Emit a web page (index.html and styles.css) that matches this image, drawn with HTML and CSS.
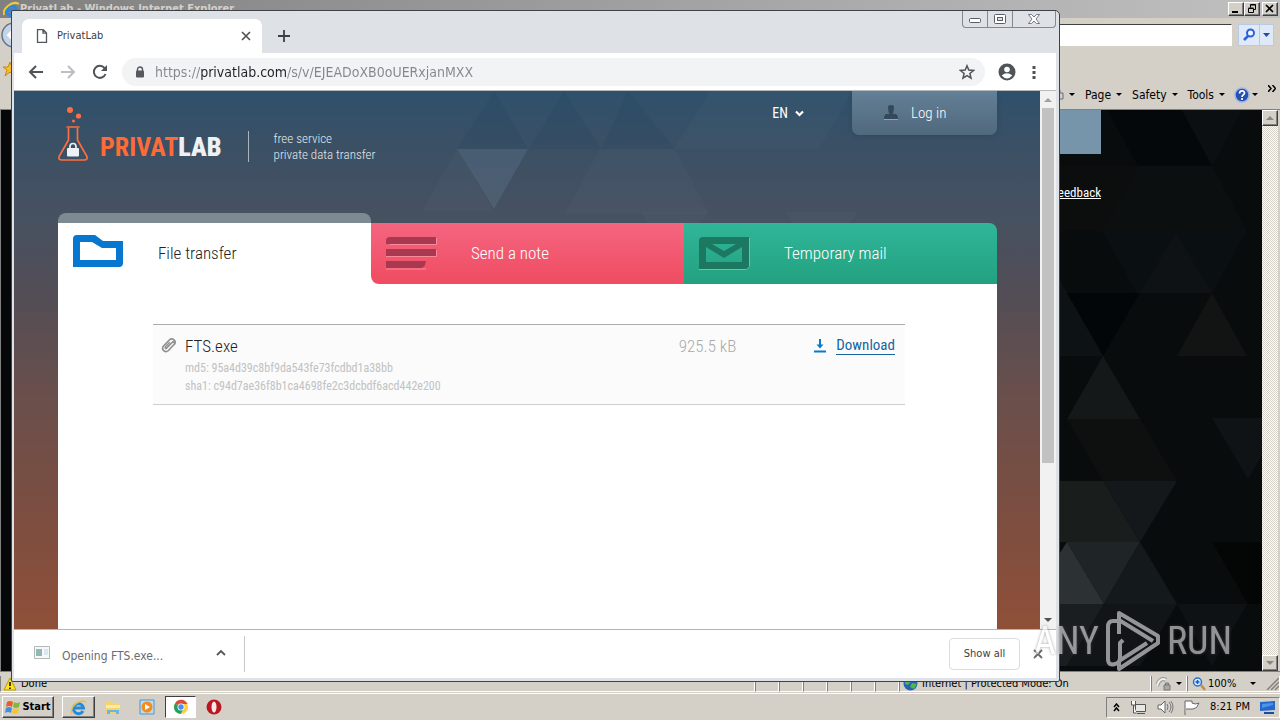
FILE: index.html
```html
<!DOCTYPE html>
<html lang="en">
<head>
<meta charset="utf-8">
<title>PrivatLab</title>
<link rel="stylesheet" href="styles.css">
</head>
<body>
<section class="ie" aria-label="Internet Explorer">
  <header class="ie-title">
    <svg class="ie-logo" width="17" height="17" viewBox="0 0 17 17"><path d="M13 12A5 5 0 1 1 13.500 9H5" fill="none" stroke="#2d86df" stroke-width="3"/><path d="M1 14C-1 8 9-1 16 3" fill="none" stroke="#f3c934" stroke-width="2"/></svg>
    <span class="ie-name">PrivatLab - Windows Internet Explorer</span>
    <div class="ie-controls">
      <button class="bevel" aria-label="Minimize"><svg width="14" height="12" viewBox="0 0 14 12"><path d="M3 9h6" stroke="#000" stroke-width="2"/></svg></button>
      <button class="bevel" aria-label="Restore"><svg width="14" height="12" viewBox="0 0 14 12"><path d="M5.500 4.500v-3h5v5h-2M5.500 2h5M3.500 5.500h5v4h-5zM3.500 5h5" fill="none" stroke="#000"/></svg></button>
      <button class="bevel ie-close" aria-label="Close"><svg width="14" height="12" viewBox="0 0 14 12"><path d="M3 2l7 7M10 2L3 9" stroke="#000" stroke-width="1.700"/></svg></button>
    </div>
  </header>
  <div class="ie-address">
    <svg class="ie-back" width="28" height="28" viewBox="0 0 28 28"><circle cx="14" cy="14" r="12" fill="#c4d3e6" stroke="#65758c" stroke-width="1.5"/><path d="M18 14H8m4-4l-4 4 4 4" fill="none" stroke="#fff" stroke-width="2"/></svg>
    <input class="ie-input" aria-label="Search">
    <div class="ie-search">
      <button aria-label="Search"><svg width="16" height="16" viewBox="0 0 16 16"><circle cx="9.500" cy="6" r="3.500" fill="#eef5ff" stroke="#2c62d8" stroke-width="2"/><path d="M7 9l-4 4" stroke="#2c62d8" stroke-width="2.500"/></svg></button>
      <button class="narrow" aria-label="Search options"><svg width="7" height="4" viewBox="0 0 7 4"><path d="M0 0h7L3.500 4z" fill="#1d4fa5"/></svg></button>
    </div>
  </div>
  <div class="ie-commands">
    <svg class="ie-star" width="14" height="14" viewBox="0 0 14 14"><path d="M7 0l2 5h5l-4 3 2 6-5-4-5 4 2-6-4-3h5z" fill="#f5bf2c" stroke="#c68a16"/></svg>
    <button aria-label="Print"><svg width="16" height="12" viewBox="0 0 16 12"><path d="M2 4h13v6H2z" fill="#c9ccd0" stroke="#6a6f76"/><path d="M5 1h7v3M6 8h6" fill="none" stroke="#6a6f76"/></svg><i class="caret"></i></button>
    <button>Page<i class="caret"></i></button>
    <button>Safety<i class="caret"></i></button>
    <button>Tools<i class="caret"></i></button>
    <button class="help" aria-label="Help"><svg width="16" height="16" viewBox="0 0 16 16"><circle cx="8" cy="8" r="7" fill="#2450b4" stroke="#9db4de" stroke-width="1.500"/><path d="M5.500 6.500C5.500 3 10.500 3 10.500 6c0 2-2.500 1.800-2.500 4M8 11v2" fill="none" stroke="#fff" stroke-width="1.700"/></svg><i class="caret"></i></button>
    <button class="more" aria-label="More commands"><svg width="8" height="7" viewBox="0 0 8 7"><path d="M0 0l3 3.500L0 7M4.500 0l3 3.500-3 3.500" fill="none" stroke="#000" stroke-width="1.500"/></svg></button>
  </div>
  <div class="ie-body">
    <div class="ie-page">
      <svg class="ie-pattern" width="202" height="561" viewBox="1060 109 202 561">
        <rect x="1060" y="109" width="202" height="561" fill="#090c0d"/>
        <path d="M1107 109h75l30 56h-74z" fill="#04080b"/><path d="M1060 165h78l-36 65h-42z" fill="#0b0e0d"/>
        <path d="M1182 109h60l-30 56z" fill="#0b0f11"/><path d="M1138 165l-36 65h145l-35-65z" fill="#0c0f10"/>
        <path d="M1102 230h145l-35 62h-75z" fill="#0a0f11"/><path d="M1176 232l36 60h-72z" fill="#0e1214"/>
        <path d="M1067 292h73l-37 63z" fill="#030608"/><path d="M1060 280l43 75h-43z" fill="#0d1214"/>
        <path d="M1212 292l35 63h-70z" fill="#121413"/><path d="M1103 355l37 63h-73z" fill="#151819"/>
        <path d="M1212 417h50v37l-14 24z" fill="#0f1316"/><path d="M1067 418h73l37 62h-74z" fill="#0d100f"/>
        <path d="M1060 480h43l37 61h-80z" fill="#191d1c"/><path d="M1103 480h74l-37 61z" fill="#14181a"/>
        <path d="M1067 541l37 62h-44v-51z" fill="#2c3133"/><path d="M1067 541h73l-36 62z" fill="#1f2426"/>
        <path d="M1140 541l37 62h-73z" fill="#14191b"/><path d="M1060 603h44l-37 62h-7z" fill="#1a1e20"/>
        <path d="M1104 603h73l-37 62h-73z" fill="#111517"/><path d="M1212 541h50v62h-14z" fill="#040505"/>
        <path d="M1177 603h70l-35 62z" fill="#0e1214"/>
      </svg>
      <div class="ie-loginbox"></div>
      <a class="feedback" href="#">Feedback</a>
    </div>
    <div class="ie-scroll">
      <button class="bevel" aria-label="Scroll up"><svg width="8" height="4" viewBox="0 0 8 4"><path d="M4 0l4 4H0z" fill="#8a8781"/></svg></button>
      <button class="bevel" aria-label="Scroll down"><svg width="8" height="4" viewBox="0 0 8 4"><path d="M4 4l4-4H0z" fill="#8a8781"/></svg></button>
    </div>
  </div>
  <footer class="ie-status">
    <div class="cell done"><svg width="14" height="14" viewBox="0 0 14 14"><path d="M7 1l6 12H1z" fill="#ffe51f" stroke="#b79b00"/><path d="M7 5v4M7 10.500v1.500" stroke="#000" stroke-width="1.500"/></svg>Done</div>
    <div class="cell tiny"></div><div class="cell tiny"></div><div class="cell tiny"></div><div class="cell tiny"></div><div class="cell tiny"></div><div class="cell tiny"></div>
    <div class="cell zone"><svg width="15" height="15" viewBox="0 0 15 15"><circle cx="7.500" cy="7.500" r="7" fill="#2764b5"/><path d="M2 4l5-3 2 3-4 5-3-1zM9 7l5 1-3 5-4-2z" fill="#4fb848"/></svg>Internet | Protected Mode: On</div>
    <div class="cell lockcell"><svg width="16" height="14" viewBox="0 0 16 14"><path d="M1 9c2-7 6-8 9-6" fill="none" stroke="#999" stroke-width="4"/><path d="M1 9c2-7 6-8 9-6" fill="none" stroke="#eee" stroke-width="2"/><path d="M8 8h6v5H8zM9.500 8V6h3v2" fill="#aaa" stroke="#777"/></svg><i class="caret"></i></div>
    <div class="cell zoom"><svg width="14" height="14" viewBox="0 0 14 14"><circle cx="5.500" cy="5" r="4" fill="#d9ebff" stroke="#2b6dd0" stroke-width="1.500"/><path d="M3.500 5h4M5.500 3v4" stroke="#1857bb" stroke-width="1.500"/><path d="M9 8l4 5" stroke="#c58b4e" stroke-width="2.500"/></svg>100%<i class="caret"></i><svg class="grip" width="13" height="13" viewBox="0 0 13 13"><path d="M1 13L13 1M5 13l8-8M9 13l4-4" stroke="#85817a" stroke-width="1.500"/></svg></div>
  </footer>
</section>

<footer class="taskbar">
  <button class="bevel start"><svg width="16" height="15" viewBox="0 0 16 15"><path d="M2 2q3-2 6 0L7 7Q4 5 1 7z" fill="#ea5b2a"/><path d="M9 2q3 2 6 0l-1 5q-3 2-6 0z" fill="#7fba3c"/><path d="M1 8q3-2 6 0l-1 5q-3-2-6 0z" fill="#3f8ee0"/><path d="M8 8q3 2 6 0l-1 5q-3 2-6 0z" fill="#f7c52d"/></svg>Start</button>
  <button class="bevel task" aria-label="Internet Explorer"><svg width="17" height="17" viewBox="0 0 17 17"><path d="M13 12A5 5 0 1 1 13.500 9H5" fill="none" stroke="#248bdc" stroke-width="3"/><path d="M2 15C-1 9 9-1 16 3" fill="none" stroke="#f0c132" stroke-width="1.500"/></svg></button>
  <button class="launch" aria-label="Explorer"><svg width="16" height="16" viewBox="0 0 16 16"><path d="M1 2h6l1 2h7v10H1z" fill="#f3d46e"/><path d="M1 6h14v3H1z" fill="#fbeaa6"/><path d="M2 15v-4h12v4h-3v-2H5v2z" fill="#67b6e4"/></svg></button>
  <button class="launch" aria-label="Media Player"><svg width="16" height="16" viewBox="0 0 16 16"><path d="M1 1h14v14H1z" fill="#b9dcf4" stroke="#4f94c8"/><circle cx="8" cy="8" r="5.500" fill="#f48c1c"/><path d="M6 5l5 3-5 3z" fill="#fff"/></svg></button>
  <button class="pressed" aria-label="Chrome"><svg width="16" height="16" viewBox="0 0 16 16"><circle cx="8" cy="8" r="7" fill="#ffcd42"/><path d="M8 8L2 4.400A7 7 0 0 1 14.500 5H8z" fill="#de4b3c"/><path d="M8 8l-6-3.600A7 7 0 0 0 7.500 15L10.500 10z" fill="#1da261"/><circle cx="8" cy="8" r="3.500" fill="#fff"/><circle cx="8" cy="8" r="2.700" fill="#4a8bf4"/></svg></button>
  <button class="launch" aria-label="Opera"><svg width="16" height="16" viewBox="0 0 16 16"><circle cx="8" cy="8" r="7.500" fill="#bc1721"/><ellipse cx="8" cy="8" rx="2.500" ry="5.500" fill="#f5e9e9"/></svg></button>
  <div class="tray">
    <svg width="7" height="9" viewBox="0 0 7 9"><path d="M1 4l2.500-3L6 4M1 8l2.500-3L6 8" fill="none" stroke="#000" stroke-width="1.500"/></svg>
    <svg class="net" width="17" height="15" viewBox="0 0 17 15"><path d="M5.500 4.500h10v7h-10zM7 13.500h8" fill="#e9e7e3" stroke="#555"/><path d="M1.500 1v4h4V1M3.500 5v8h3" fill="#fff" stroke="#555"/></svg>
    <svg class="sound" width="17" height="14" viewBox="0 0 17 14"><path d="M1 5h3l4-4v12L4 9H1z" fill="#fff" stroke="#666"/><path d="M10 4q2 3 0 6M12 2q4 5 0 10M14 1q4 6 0 12" fill="none" stroke="#777"/></svg>
    <svg class="flag" width="16" height="15" viewBox="0 0 16 15"><path d="M1 15V1h7v2q3 2 7 0-2 6-6 6H2" fill="#fff" stroke="#666"/></svg>
    <time>8:21 PM</time>
    <svg width="15" height="13" viewBox="0 0 15 13"><path d="M0 1l15-1v9l-15 1z" fill="#2667ca"/><path d="M2 3l11-1v2L2 7z" fill="#4c94e9"/><path d="M4 11h10v2H4z" fill="#1c4b9a"/></svg>
  </div>
</footer>

<section class="chrome" aria-label="Chrome">
  <header class="tabstrip">
    <div class="tab">
      <svg width="12" height="14" viewBox="0 0 12 14"><path d="M1.500.7h5.800l3.200 3.200v9.400h-9zM7 1v3.200h3.500" fill="none" stroke="#55585c" stroke-width="1.300"/></svg>
      <span>PrivatLab</span>
      <button aria-label="Close tab"><svg width="10" height="10" viewBox="0 0 10 10"><path d="M1 1l8 8M9 1L1 9" stroke="#505357" stroke-width="1.700"/></svg></button>
    </div>
    <button class="newtab" aria-label="New tab"><svg width="12" height="12" viewBox="0 0 12 12"><path d="M6 0v12M0 6h12" stroke="#3c4043" stroke-width="1.800"/></svg></button>
    <div class="wincontrols">
      <button class="min" aria-label="Minimize"><svg width="12" height="6" viewBox="0 0 12 6"><rect x=".5" y=".5" width="11" height="4" rx="1" fill="#fff" stroke="#5a5d66"/></svg></button>
      <button aria-label="Maximize"><svg width="12" height="11" viewBox="0 0 12 11"><rect x=".5" y=".5" width="11" height="9" rx="1" fill="#fff" stroke="#5a5d66"/><rect x="3.500" y="3.500" width="5" height="3" fill="#dee1e6" stroke="#5a5d66"/></svg></button>
      <button class="wide" aria-label="Close"><svg width="12" height="10" viewBox="0 0 12 10"><path d="M.5.500h3L6 3 8.500.500h3L8 5l3.500 4.500h-3L6 7 3.500 9.500h-3L4 5z" fill="#fff" stroke="#5a5d66" stroke-width=".8"/></svg></button>
    </div>
  </header>
  <div class="toolbar">
    <button aria-label="Back"><svg width="16" height="16" viewBox="0 0 16 16"><path d="M15 8H2m6-6L2 8l6 6" fill="none" stroke="#505357" stroke-width="2"/></svg></button>
    <button aria-label="Forward"><svg width="16" height="16" viewBox="0 0 16 16"><path d="M1 8h13M8 2l6 6-6 6" fill="none" stroke="#bcbec1" stroke-width="2"/></svg></button>
    <button aria-label="Reload"><svg width="16" height="16" viewBox="0 0 16 16"><path d="M13.500 10A6 6 0 1 1 12.500 4" fill="none" stroke="#505357" stroke-width="2"/><path d="M15 1v6H9z" fill="#505357"/></svg></button>
    <div class="omnibox">
      <svg width="10" height="12" viewBox="0 0 10 12"><path d="M2.500 5V3.500a2.500 2.500 0 0 1 5 0V5" fill="none" stroke="#55585c" stroke-width="1.400"/><rect x="1" y="4.500" width="8" height="7" rx="1" fill="#55585c"/></svg>
      <input class="url" aria-label="Address" value="https://privatlab.com/s/v/EJEADoXB0oUERxjanMXX">
      <button aria-label="Bookmark"><svg width="16" height="16" viewBox="0 0 16 16"><path d="M8 1.800l1.800 4.300 4.700.4-3.600 3 1.100 4.600L8 11.600l-4 2.500 1.100-4.600-3.600-3 4.700-.4z" fill="none" stroke="#505357" stroke-width="1.500"/></svg></button>
    </div>
    <button aria-label="Profile"><svg width="18" height="18" viewBox="0 0 18 18"><circle cx="9" cy="9" r="8.500" fill="#505357"/><circle cx="9" cy="6.500" r="2.800" fill="#fff"/><path d="M3.700 12.500q5.300-4.500 10.600 0-5.300 6-10.600 0z" fill="#fff"/></svg></button>
    <button aria-label="Menu"><svg width="4" height="14" viewBox="0 0 4 14"><path d="M.5 1h3v3h-3zM.5 6h3v3h-3zM.5 11h3v3h-3z" fill="#505357"/></svg></button>
  </div>
  <div class="viewport">
    <main class="page">
      <svg class="pattern" width="1026" height="132" viewBox="14 91 1026 132">
        <path d="M457 149h71l-34 60z" fill="#8fb4d0" fill-opacity=".14"/>
        <path d="M494 91l-37 58h71zM564 91l-35 58h72zM628 91l-27 58h74z" fill="#00384a" fill-opacity=".08"/>
        <path d="M457 149l-35 62h72zM600 149h75l34 64H565z" fill="#fff" fill-opacity=".02"/>
        <path d="M640 212h69l-9 11h-53zM785 212h73l-8 11h-58zM710 91l-36 58h145l34-58z" fill="#fff" fill-opacity=".02"/>
      </svg>
      <header class="site-head">
        <a class="logo" href="#">
          <svg width="30" height="56" viewBox="0 0 30 56"><circle cx="12" cy="4" r="3" fill="#ff6e3e"/><circle cx="20.500" cy="10" r="2.600" fill="#ff6e3e"/><circle cx="15.500" cy="15" r="1.500" fill="#ff6e3e"/><path d="M8.500 21h13M10.500 22v12L1.300 50q-1.500 4 2.500 4h22.400q4 0 2.500-4L19.500 34V22" fill="none" stroke="#ff6e3e" stroke-width="1.700"/><path d="M12 43v-2.500a3 3 0 0 1 6 0V43" fill="none" stroke="#eef2f5" stroke-width="1.700"/><rect x="9" y="42" width="12" height="8.500" rx="1" fill="#eef2f5"/></svg>
          <span class="brand">PRIVAT<b>LAB</b></span>
        </a>
        <p class="slogan">free service<br>private data transfer</p>
        <button class="lang">EN<svg width="9" height="7" viewBox="0 0 9 7"><path d="M1 1.500l3.500 3.500L8 1.500" fill="none" stroke="#fff" stroke-width="2.200"/></svg></button>
        <button class="login"><svg width="16" height="16" viewBox="0 0 16 16"><path d="M5 1q3-2 6 0l-.5 6-1 2H13q2 1 2 5H1q0-4 2-5h3.500l-1-2z" fill="#34495c"/><path d="M1 14.500h14" stroke="#8fa5b5"/></svg>Log in</button>
      </header>
      <nav class="tabs">
        <a class="svc active" href="#"><svg width="50" height="34" viewBox="0 0 50 34"><path fill-rule="evenodd" d="M4 1h18l8 6h20v22q0 4-4 4H0V5q0-4 4-4zM7 8v18h36V14H29l-10-6z" fill="#0877cf"/></svg>File transfer</a>
        <a class="svc note" href="#"><svg width="51" height="34" viewBox="0 0 51 34"><path d="M0 33h40M0 20.500h50.500V14M4 8.500h46.500V2" fill="none" stroke="#f88b98"/><path d="M4 1h46v7H0V5q0-4 4-4zM0 13h50v7H0zM0 25h40q-1 7-5 7H0z" fill="#a93950"/></svg>Send a note</a>
        <a class="svc mail" href="#"><svg width="51" height="34" viewBox="0 0 51 34"><path d="M0 33.500h46q4 0 4.500-4V2" fill="none" stroke="#62c7ad"/><path fill-rule="evenodd" d="M4 1h46v28q0 4-4 4H0V5q0-4 4-4zM7 11v15h36V11L25 22zM13 8l12 7 12-7z" fill="#1d7862"/></svg>Temporary mail</a>
      </nav>
      <section class="content">
        <article class="file">
          <svg class="clip" width="16" height="17" viewBox="0 0 16 17"><path d="M4.800 11.800l6.200-6.300c1.700-1.700 3.500.3 2 2L7.500 13.500c-3 3-8-1-5-4.500L8.300 3C11 .3 15.800 3.500 13.500 7.300" fill="none" stroke="#919191" stroke-width="1.700"/><path d="M4.800 11.800c-1.200-.8-.5-2 0-2.500l4-4" fill="none" stroke="#919191" stroke-width="1.500"/></svg>
          <div class="info"><h1>FTS.exe</h1><p>md5: 95a4d39c8bf9da543fe73fcdbd1a38bb</p><p>sha1: c94d7ae36f8b1ca4698fe2c3dcbdf6acd442e200</p></div>
          <span class="size">925.5 kB</span>
          <div class="get"><svg width="12" height="14" viewBox="0 0 12 14"><path d="M6 0v8" stroke="#087ac8" stroke-width="2"/><path d="M2.500 5.500h7L6 9.500z" fill="#087ac8"/><path d="M0 12.500h12" stroke="#087ac8" stroke-width="2"/></svg><a href="#">Download</a></div>
        </article>
      </section>
    </main>
    <div class="scrollbar"><svg width="8" height="4" viewBox="0 0 8 4"><path d="M4 0l4 4H0z" fill="#a0a0a0"/></svg><div class="thumb"></div><svg class="down" width="8" height="4" viewBox="0 0 8 4"><path d="M4 4l4-4H0z" fill="#505050"/></svg></div>
  </div>
  <footer class="downloads">
    <div class="item"><svg width="16" height="13" viewBox="0 0 16 13"><path d="M.5.500h15v12H.5z" fill="#f6f8f9" stroke="#b5b8bb"/><path d="M2 3h6v7H2z" fill="#8fb9b5"/><path d="M10 4h4M10 6h4M10 8h4" stroke="#c5d2e8"/></svg><span>Opening FTS.exe...</span><button aria-label="Download options"><svg width="10" height="7" viewBox="0 0 10 7"><path d="M1 6l4-4 4 4" fill="none" stroke="#55585c" stroke-width="1.800"/></svg></button></div>
    <button class="showall">Show all</button>
    <button class="dismiss" aria-label="Close downloads"><svg width="10" height="10" viewBox="0 0 10 10"><path d="M1 1l8 8M9 1L1 9" stroke="#66696d" stroke-width="1.800"/></svg></button>
  </footer>
</section>

<div class="watermark"><span>ANY</span><svg width="56" height="62" viewBox="0 0 56 62"><path d="M12 11H8q-5 0-5 6v32q0 7 7 5 5-1 5-6V33l3-3M14 24V3l39 23v7L14 59v-8l28-18M14 10l34 21" fill="none" stroke="#fff" stroke-width="4" stroke-linejoin="round"/></svg><span>RUN</span></div>
</body>
</html>
```
FILE: styles.css
```css
* { box-sizing: border-box; }
:root {
  --ui: "DejaVu Sans Condensed", "DejaVu Sans", sans-serif;
  --site: "Roboto Condensed", "Liberation Sans Narrow", "Liberation Sans", sans-serif;
  --face: #d4d0c8;
}
body { margin: 0; height: 100vh; display: flex; flex-direction: column; overflow: hidden; position: relative; font: 11px/14px var(--ui); background: var(--face); color: #000; }
button { font: inherit; color: inherit; border: 0; background: none; padding: 0; display: flex; align-items: center; justify-content: center; flex: none; }
svg { display: block; flex: none; }
a { color: inherit; text-decoration: none; }
p, h1 { margin: 0; }
.bevel { background: var(--face); border: 1px solid; border-color: #fff #404040 #404040 #fff; box-shadow: inset -1px -1px #808080; }
.caret { border: 3px solid transparent; border-top-color: #000; border-bottom: 0; margin-left: 6px; }

.ie { flex: 1; min-height: 0; display: flex; flex-direction: column; }
.ie-title { height: 18px; flex: none; display: flex; align-items: center; padding: 0 2px 0 3px; background: linear-gradient(90deg, #808080, #c0c0c0); color: #d4d0c8; font-weight: bold; }
.ie-name { flex: 1; }
.ie-controls { display: flex; }
.ie-controls button { width: 16px; height: 14px; }
.ie-controls .ie-close { margin-left: 2px; }
.ie-address { display: flex; align-items: center; gap: 6px; height: 34px; flex: none; padding-right: 6px; }
.ie-back { margin-right: 20px; }
.ie-input { flex: 1; height: 22px; background: #fff; border: 1px solid; border-color: #404040 #fff #fff #404040; }
.ie-search { display: flex; height: 22px; border: 1px solid #b9cae6; background: #dfe9f8; }
.ie-search button { width: 20px; }
.ie-search .narrow { width: 14px; border-left: 1px solid #b9cae6; }
.ie-commands { flex: none; height: 57px; padding: 10px 4px 0 3px; display: flex; align-items: center; justify-content: flex-end; gap: 10px; }
.ie-commands button { margin-top: 18px; font-size: 12px; }
.ie-star { margin-right: auto; align-self: flex-start; }
.ie-commands .caret { margin-left: 5px; }
.ie-commands .help { margin-left: -1px; }
.ie-commands .help .caret { margin-left: 2px; }
.ie-commands .more { align-self: flex-start; margin-top: 23px; }
.ie-body { flex: 1; min-height: 0; display: flex; border: 1px solid #808080; border-right: 0; }
.ie-page { flex: 1; position: relative; background: #050708; padding-right: 161px; display: flex; flex-direction: column; align-items: flex-end; color: #fff; font: 13px/16px var(--site); }
.ie-pattern { position: absolute; right: 0; top: 0; }
.ie-loginbox { position: relative; width: 145px; height: 44px; background: #7695ab; }
.feedback { position: relative; margin-top: 31px; text-decoration: underline; }
.ie-scroll { width: 16px; margin-right: 2px; display: flex; flex-direction: column; justify-content: space-between; background: repeating-conic-gradient(#fff 0 25%, #d4d0c8 0 50%) 0 0 / 2px 2px; }
.ie-scroll button { width: 16px; height: 16px; }
.ie-status { height: 22px; flex: none; display: flex; padding: 4px 0 1px; border-bottom: 1px solid #fff; }
.cell { display: flex; align-items: center; gap: 4px; border-left: 1px solid #808080; border-right: 1px solid #fff; border-bottom: 1px solid #fff; }
.done { flex: 1; padding-left: 2px; }
.tiny { width: 24px; }
.zone { width: 252px; padding-left: 3px; }
.lockcell { width: 36px; padding-left: 4px; gap: 2px; }
.lockcell .caret { margin-left: 2px; }
.zoom { width: 93px; padding-left: 4px; gap: 2px; }
.zoom .caret { margin-left: auto; }
.grip { margin-left: 8px; }

.taskbar { flex: none; height: 26px; display: flex; align-items: center; padding: 0 0 0 2px; gap: 10px; }
.start { width: 52px; height: 22px; font-weight: bold; font-size: 11px; gap: 1px; margin-right: -2px; }
.task { width: 33px; height: 22px; }
.launch { width: 16px; height: 22px; }
.launch + .launch { margin-left: 8px; }
.pressed { width: 31px; height: 22px; background: #fff; border: 1px solid; border-color: #404040 #fff #fff #404040; }
.tray { margin-left: auto; height: 21px; width: 174px; padding: 0 4px 0 6px; display: flex; align-items: center; justify-content: space-between; border: 1px solid; border-color: #808080 #fff #fff #808080; }

.chrome { position: absolute; inset: 10px 220px 38px 11px; display: flex; flex-direction: column; background: #dee1e6; border: 1px solid #3f4247; border-radius: 2px 5px 2px 2px; padding: 0 3px 3px 2px; }
.tabstrip { height: 42px; flex: none; display: flex; align-items: flex-end; padding-left: 8px; }
.tab { width: 240px; height: 34px; background: #fff; border-radius: 7px 7px 0 0; display: flex; align-items: center; padding: 0 11px 0 14px; gap: 9px; color: #3c4043; }
.tab span { flex: 1; }
.newtab { width: 28px; height: 34px; margin-left: 8px; }
.wincontrols { margin-left: auto; align-self: flex-start; display: flex; height: 17px; border: 1px solid #85888f; border-top: 0; border-radius: 0 0 4px 4px; }
.wincontrols button { width: 25px; border-right: 1px solid #85888f; }
.wincontrols .min { padding-top: 4px; }
.wincontrols .wide { width: 42px; border-right: 0; }
.toolbar { height: 38px; flex: none; display: flex; align-items: center; background: #fff; border-bottom: 1px solid #b7babd; padding: 0 20px 0 14px; gap: 16px; }
.omnibox { flex: 1; height: 28px; border-radius: 14px; background: #f1f3f4; display: flex; align-items: center; padding: 0 10px 0 13px; gap: 10px; margin: 0 -3px 0 -2px; }
.toolbar > button:nth-last-child(2) { margin-left: 0; }
.omnibox { margin-right: -3px; }
.url { flex: 1; min-width: 0; border: 0; padding: 0; height: 20px; font: 14px/20px var(--ui); outline: 0; -webkit-text-fill-color: transparent; background: linear-gradient(90deg, #83878b 46px, #202124 46px 132px, #83878b 132px); -webkit-background-clip: text; background-clip: text; }
.viewport { flex: 1; min-height: 0; display: flex; }
.page { flex: 1; min-width: 0; position: relative; overflow: hidden; display: flex; flex-direction: column; padding: 0 43px 0 44px; font-family: var(--site); color: #fff; background: linear-gradient(180deg, #2f506c 0%, #3d5064 12%, #475160 24%, #544d55 39%, #6a4f4b 57%, #7d4e40 80%, #8f5038 100%); }
.pattern { position: absolute; left: 0; top: 0; }
.site-head { position: relative; height: 122px; display: flex; align-items: flex-start; }
.logo { display: flex; align-items: flex-end; gap: 12px; padding-top: 15px; }
.brand { font: bold 26px/30px var(--site); color: #ff6b37; }
.brand b { color: #edf1f4; }
.slogan { font-size: 13px; font-weight: 300; line-height: 16px; color: #e2e9ee; margin: 40px 0 0 26px; padding-left: 25px; border-left: 1px solid #a9b5c0; height: 31px; }
.lang { margin: 14px 48px 0 auto; font-size: 14px; line-height: 16px; gap: 7px; }
.login { width: 145px; height: 44px; border-radius: 0 0 7px 7px; background: linear-gradient(#648096, #50687e); box-shadow: 0 1px 5px #24384955; font-size: 15px; font-weight: 300; gap: 12px; justify-content: flex-start; padding-left: 31px; }
.tabs { position: relative; display: grid; grid-template-columns: repeat(3, 1fr); align-items: end; background: linear-gradient(#fff, #fff) 0 100% / 100% 50% no-repeat; }
.svc { height: 61px; display: flex; align-items: center; gap: 34px; padding: 0 0 2px 15px; font-size: 17px; line-height: 20px; font-weight: 300; }
.active { height: 71px; border-top: 10px solid #7f8992; background: #fff; color: #222; border-radius: 8px 8px 0 0; gap: 35px; }
.active svg { margin-bottom: 4px; }
.note { background: linear-gradient(#f56580, #ef4c61); border-radius: 0 0 0 8px; }
.mail { background: linear-gradient(#31b699, #22a17f); border-radius: 0 8px 0 0; }
.content { flex: 1; position: relative; background: #fff; padding: 40px 92px 0 95px; }
.file { display: flex; align-items: flex-start; min-height: 81px; padding: 12px 10px 8px 8px; border-top: 1px solid #acacac; border-bottom: 1px solid #cfcfcf; background: #fbfbfb; color: #222; line-height: 18px; }
.clip { margin-right: 8px; }
.info { flex: 1; }
.info h1 { font-size: 17px; font-weight: 300; line-height: 18px; margin-bottom: 4px; }
.info p { font-size: 12px; line-height: 18px; color: #c2c2c2; }
.size { font-size: 17px; font-weight: 300; color: #aaa; margin-right: 78px; }
.get { display: flex; align-items: center; gap: 10px; font-size: 15px; color: #17649f; }
.get a { border-bottom: 1px solid; line-height: 17px; }
.scrollbar { width: 16px; background: #f1f1f1; display: flex; flex-direction: column; align-items: center; padding: 7px 0; }
.thumb { width: 12px; height: 355px; margin-top: 6px; background: #c1c1c1; }
.down { margin-top: auto; }
.downloads { height: 49px; flex: none; background: #fff; border-top: 1px solid #b3b5b7; display: flex; align-items: center; padding-right: 13px; }
.item { display: flex; align-items: center; width: 231px; height: 36px; border-right: 1px solid #c6c8ca; padding: 0 18px 0 20px; gap: 12px; font-size: 12px; color: #696c70; }
.item span { flex: 1; white-space: nowrap; padding-top: 4px; }
.item svg { margin-bottom: 4px; }
.showall { margin-left: auto; width: 71px; height: 32px; border: 1px solid #dadce0; border-radius: 4px; color: #3c4043; }
.dismiss { margin-left: 13px; }
.watermark { position: absolute; right: 48px; bottom: 48px; display: flex; align-items: center; gap: 6px; opacity: .55; color: #fff; font: 38px/62px var(--site); text-shadow: 0 0 3px #555; }
```
